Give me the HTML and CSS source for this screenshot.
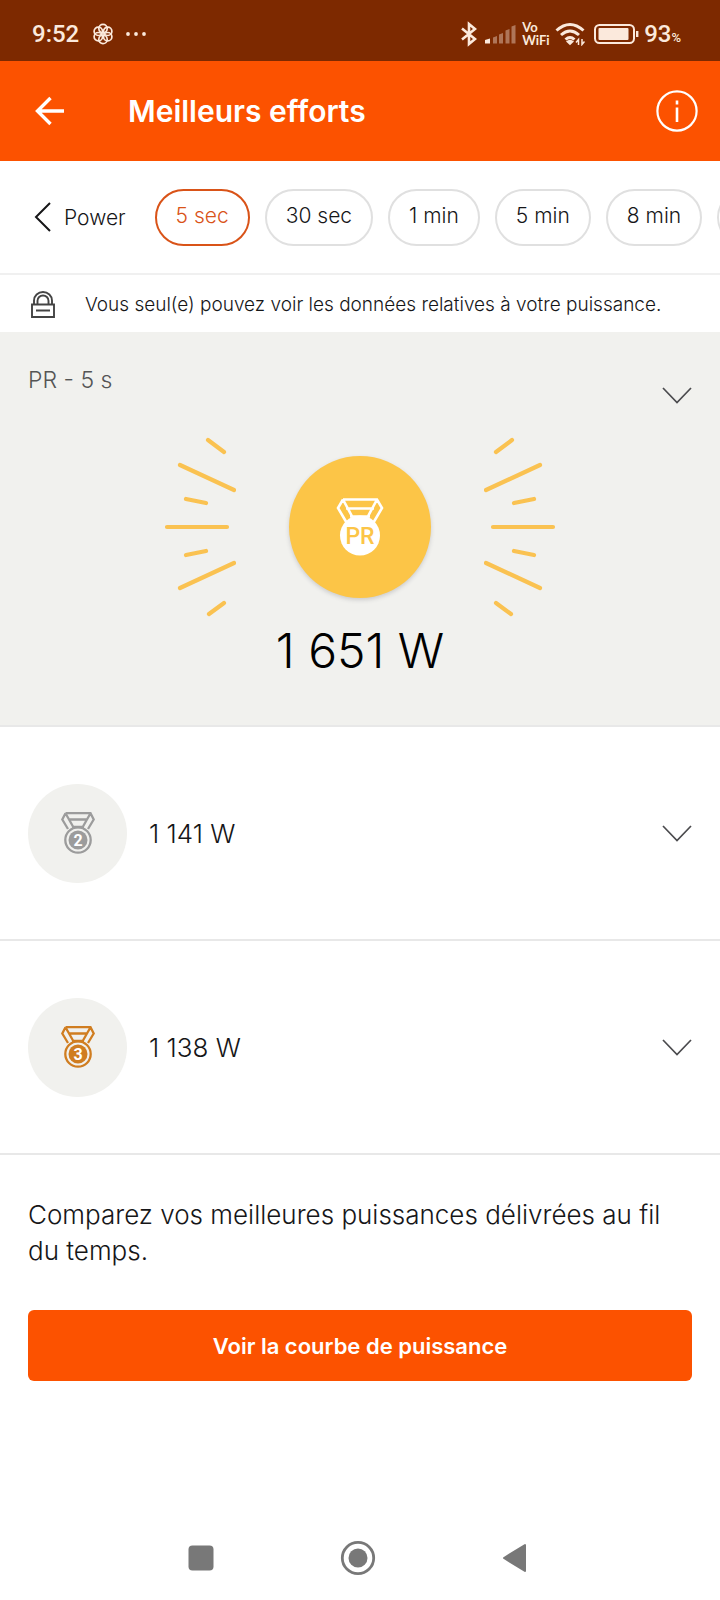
FILE: index.html
```html
<!DOCTYPE html>
<html lang="fr">
<head>
<meta charset="utf-8">
<meta name="viewport" content="width=device-width, initial-scale=1">
<title>Meilleurs efforts</title>
<link rel="stylesheet" href="styles.css">
</head>
<body>
<div class="screen">
  <div class="status">
    <div class="status-left">
      <span class="clock">9:52</span>
      <svg class="flower" width="22" height="22" viewBox="0 0 22 22" fill="none" stroke="currentColor" stroke-width="1.7">
        <circle cx="11" cy="5.6" r="4.2"/><circle cx="15.7" cy="8.3" r="4.2"/><circle cx="15.7" cy="13.7" r="4.2"/><circle cx="11" cy="16.4" r="4.2"/><circle cx="6.3" cy="13.7" r="4.2"/><circle cx="6.3" cy="8.3" r="4.2"/>
      </svg>
      <svg width="20" height="22" viewBox="0 0 20 22" fill="currentColor"><circle cx="2" cy="11" r="1.9"/><circle cx="10" cy="11" r="1.9"/><circle cx="18" cy="11" r="1.9"/></svg>
    </div>
    <div class="status-right">
      <svg width="16" height="26" viewBox="0 0 16 26" fill="none" stroke="currentColor" stroke-width="2.6"><path d="M1 7.500L14 18L8 23V3L14 8L1 18.500"/></svg>
      <svg class="signal" width="31" height="20" viewBox="0 0 31 20" fill="currentColor"><path d="M0 19.500v-3.500l5-1.500v5z"/><g opacity=".4"><path d="M8 19.500v-6l4-1.500v7.500zM14 19.500v-9l4-1.500v10.500zM20.500 19.500v-13l4-1.500v14.500zM26.500 19.500v-17l4-1.500v18.500z"/></g></svg>
      <span class="vowifi"><span>Vo</span><span>WiFi</span></span>
      <svg class="wifi" width="30" height="24" viewBox="0 0 30 24" fill="none" stroke="currentColor" stroke-width="3"><path d="M1.500 8.500Q15-3.500 28.500 8.500M6 13Q15 5 24 13M10.500 17.500Q15 13.500 19.500 17.500"/><path d="M11 19.500q4-3.500 8 0l-4 3.800z" fill="currentColor" stroke="none"/><path d="M23.500 23V17.500l-2.500 3M27 17v5.500l2.500-3" stroke-width="1.500"/></svg>
      <svg class="battery" width="45" height="20" viewBox="0 0 45 20" fill="none"><rect x="1" y="1" width="39" height="18" rx="4.500" stroke="currentColor" stroke-width="2"/><rect x="4.500" y="4" width="30" height="12" rx="1" fill="currentColor"/><path d="M43.200 7v6" stroke="currentColor" stroke-width="2.400"/></svg>
      <span class="percent">93<small>%</small></span>
    </div>
  </div>

  <header class="appbar">
    <button class="icon-button" aria-label="Retour"><svg width="30" height="30" viewBox="0 0 30 30" fill="none" stroke="currentColor" stroke-width="3.4"><path d="M29 15H3M15.500 2L2.500 15L15.500 28"/></svg></button>
    <h1>Meilleurs efforts</h1>
    <button class="icon-button info" aria-label="Informations"><svg width="42" height="42" viewBox="0 0 42 42" fill="none" stroke="currentColor" stroke-width="2.200"><circle cx="21" cy="21" r="19.600"/><path d="M21 17.500V32" stroke-width="2.600"/><path d="M21 10.500v4" stroke-width="2.600"/></svg></button>
  </header>

  <nav class="filters">
    <button class="back-filter"><svg width="17" height="30" viewBox="0 0 17 30" fill="none" stroke="currentColor" stroke-width="2"><path d="M16 1L2 15L16 29"/></svg>Power</button>
    <button class="chip selected">5 sec</button>
    <button class="chip">30 sec</button>
    <button class="chip">1 min</button>
    <button class="chip">5 min</button>
    <button class="chip">8 min</button>
    <button class="chip more" aria-label="Durée suivante"></button>
  </nav>

  <div class="privacy">
    <svg width="24" height="27" viewBox="0 0 24 27" fill="none" stroke="currentColor" stroke-width="1.900"><path d="M1 13.500h22v12.500H1zM5 19.500h14M3 13.500V9.500a9 8.500 0 0 1 18 0v4M6.500 13.500V9.800a5.500 5.300 0 0 1 11 0v3.700"/></svg>
    <span>Vous seul(e) pouvez voir les données relatives à votre puissance.</span>
  </div>

  <main>
    <section class="record">
      <div class="record-head">
        <h2>PR - 5 s</h2>
        <button class="icon-button expand" aria-label="Afficher le détail du record"><svg width="30" height="17" viewBox="0 0 30 17" fill="none" stroke="currentColor" stroke-width="1.700"><path d="M1 1L15 15.500L29 1"/></svg></button>
      </div>
      <div class="award">
        <svg class="rays" width="72" height="180" viewBox="0 0 72 180" fill="none" stroke="currentColor" stroke-width="4.200" stroke-linecap="round"><path d="M44 3l16 12M16 28l54 25M22 62l20 4M3 90h60M22 118l20-4M16 151l54-25M45 177l15-11"/></svg>
        <div class="gold">
          <svg width="48" height="58" viewBox="0 0 48 58"><path d="M7 1.500H41L46 10L36 27M12 27L2 10L7 1.500M10 10.500H38M14 18.500H34M7 1.500L18 22M41 1.500L30 22" fill="none" stroke="#fff" stroke-width="2.600"/><circle cx="24" cy="37.500" r="20" fill="#fff"/><text x="24" y="46" text-anchor="middle" class="pr-text">PR</text></svg>
        </div>
        <svg class="rays" width="72" height="180" viewBox="0 0 72 180" fill="none" stroke="currentColor" stroke-width="4.200" stroke-linecap="round"><path d="M28 3l-16 12M56 28l-54 25M50 62l-20 4M69 90H9M50 118l-20-4M56 151l-54-25M27 177l-15-11"/></svg>
      </div>
      <p class="best">1 651 W</p>
    </section>

    <section class="effort">
      <div class="medal silver"><svg width="34" height="42" viewBox="0 0 34 42" fill="none" stroke="currentColor" stroke-width="2.300"><path d="M4.500 1.200H29.500L32.700 7.500L27 17M4.500 1.200L1.300 7.500L7 17M4.500 1.200L12 14.500M29.500 1.200L22 14.500M8 7.500H26M11 15H23"/><circle cx="17" cy="28" r="12.700"/><circle cx="17" cy="28" r="9.500" fill="currentColor" stroke="none"/><text x="17" y="34" text-anchor="middle" class="rank">2</text></svg></div>
      <span class="watts">1 141 W</span>
      <button class="icon-button expand" aria-label="Afficher le deuxième effort"><svg width="30" height="17" viewBox="0 0 30 17" fill="none" stroke="currentColor" stroke-width="1.700"><path d="M1 1L15 15.500L29 1"/></svg></button>
    </section>
    <section class="effort">
      <div class="medal bronze"><svg width="34" height="42" viewBox="0 0 34 42" fill="none" stroke="currentColor" stroke-width="2.300"><path d="M4.500 1.200H29.500L32.700 7.500L27 17M4.500 1.200L1.300 7.500L7 17M4.500 1.200L12 14.500M29.500 1.200L22 14.500M8 7.500H26M11 15H23"/><circle cx="17" cy="28" r="12.700"/><circle cx="17" cy="28" r="9.500" fill="currentColor" stroke="none"/><text x="17" y="34" text-anchor="middle" class="rank">3</text></svg></div>
      <span class="watts">1 138 W</span>
      <button class="icon-button expand" aria-label="Afficher le troisième effort"><svg width="30" height="17" viewBox="0 0 30 17" fill="none" stroke="currentColor" stroke-width="1.700"><path d="M1 1L15 15.500L29 1"/></svg></button>
    </section>

    <section class="compare">
      <p>Comparez vos meilleures puissances délivrées au fil du temps.</p>
      <button class="primary">Voir la courbe de puissance</button>
    </section>
  </main>

  <div class="system-nav">
    <button class="icon-button" aria-label="Applications récentes"><svg width="36" height="36" viewBox="0 0 36 36" fill="currentColor"><rect x="5.500" y="5.500" width="25" height="25" rx="4"/></svg></button>
    <button class="icon-button" aria-label="Accueil"><svg width="36" height="36" viewBox="0 0 36 36"><circle cx="18" cy="18" r="15.700" fill="none" stroke="currentColor" stroke-width="2.800"/><circle cx="18" cy="18" r="9.500" fill="currentColor"/></svg></button>
    <button class="icon-button" aria-label="Précédent"><svg width="36" height="36" viewBox="0 0 36 36" fill="currentColor" stroke="currentColor" stroke-width="2" stroke-linejoin="round"><path d="M7 18L28 5V31Z"/></svg></button>
  </div>
</div>
</body>
</html>
```
FILE: styles.css
```css
* { box-sizing: border-box; }
body { margin: 0; background: #fff; color: #161618; font-family: Inter, "Liberation Sans", sans-serif; font-weight: 300; }
h1, h2, p { margin: 0; }
button { font: inherit; color: inherit; background: none; border: 0; padding: 0; cursor: pointer; }
svg { display: block; flex: none; }
.screen { min-height: 100vh; display: flex; flex-direction: column; overflow: hidden; }
.icon-button { display: flex; align-items: center; justify-content: center; }

.status { display: flex; justify-content: space-between; height: 61px; padding: 6px 39px 0 32px; background: #7d2900; color: #fbe9dc; font-family: Roboto, sans-serif; font-weight: 500; }
.status-left, .status-right { display: flex; align-items: center; }
.clock { font-size: 24px; margin-right: 13px; }
.flower { margin-right: 12px; }
.signal { margin: 0 6px 0 8px; }
.vowifi { display: flex; flex-direction: column; width: 28px; font: 700 13px/13px Lato, sans-serif; }
.wifi { margin-left: 5px; }
.battery { margin: 0 5px 0 9px; }
.percent { font-size: 24px; }
.percent small { font-size: 13px; }

.appbar { display: flex; align-items: center; height: 100px; padding: 0 22px 0 35px; background: #fc5200; color: #fff; }
.appbar h1 { flex: 1; margin-left: 63px; font-size: 30px; font-weight: 600; line-height: 40px; }

.filters { display: flex; align-items: center; gap: 15px; height: 114px; padding-left: 34px; border-bottom: 2px solid #f0f0f0; font-size: 21px; white-space: nowrap; }
.back-filter { display: flex; align-items: center; gap: 13px; margin-right: 14px; flex: none; }
.chip { flex: none; height: 57px; padding: 0 19px 4px; border: 2px solid #e0e0e0; border-radius: 29px; }
.chip.selected { border-color: #d95318; color: #d95318; }
.chip.more { width: 96px; }

.privacy { display: flex; align-items: center; gap: 30px; height: 57px; padding: 2px 0 0 31px; font-size: 19px; white-space: nowrap; }
.privacy svg { color: #444; }

.record { display: flex; flex-direction: column; background: #f1f1ee; padding: 34px 28px 46px; border-bottom: 2px solid #e8e8e8; }
.record-head { display: flex; justify-content: space-between; align-items: flex-start; color: #555; }
.record-head h2 { font-size: 23px; font-weight: 300; line-height: 28px; }
.record-head .expand { margin-top: 21px; }
.expand { color: #4b4b4e; }
.award { display: flex; justify-content: center; align-items: center; gap: 53px; margin-top: 33px; }
.rays { color: #fac251; }
.gold { display: flex; align-items: center; justify-content: center; width: 142px; height: 142px; border-radius: 50%; background: #fcc547; box-shadow: 0 2px 4px #ccc; }
.pr-text { font: 500 23px Roboto, sans-serif; fill: #fcc547; }
.best { margin-top: 6px; color: #000; text-align: center; font-size: 48px; line-height: 56px; }

.effort { display: flex; align-items: center; height: 214px; padding: 0 28px; border-bottom: 2px solid #e8e8e8; }
.medal { display: flex; align-items: center; justify-content: center; width: 99px; height: 99px; border-radius: 50%; background: #f1f1ee; }
.silver { color: #9c9c9c; }
.bronze { color: #d07d20; }
.rank { font: 700 16px Roboto, sans-serif; fill: #fff; stroke: none; }
.watts { flex: 1; margin-left: 22px; font-size: 26px; }

.compare { padding: 42px 28px 0; }
.compare p { font-size: 26px; line-height: 36px; }
.primary { display: block; width: 100%; height: 71px; margin-top: 41px; border-radius: 6px; background: #fc5200; color: #fff; font-size: 22px; font-weight: 600; }

.system-nav { display: flex; justify-content: center; gap: 121px; margin-top: auto; padding: 0 4px 24px 0; color: #787878; }
```
